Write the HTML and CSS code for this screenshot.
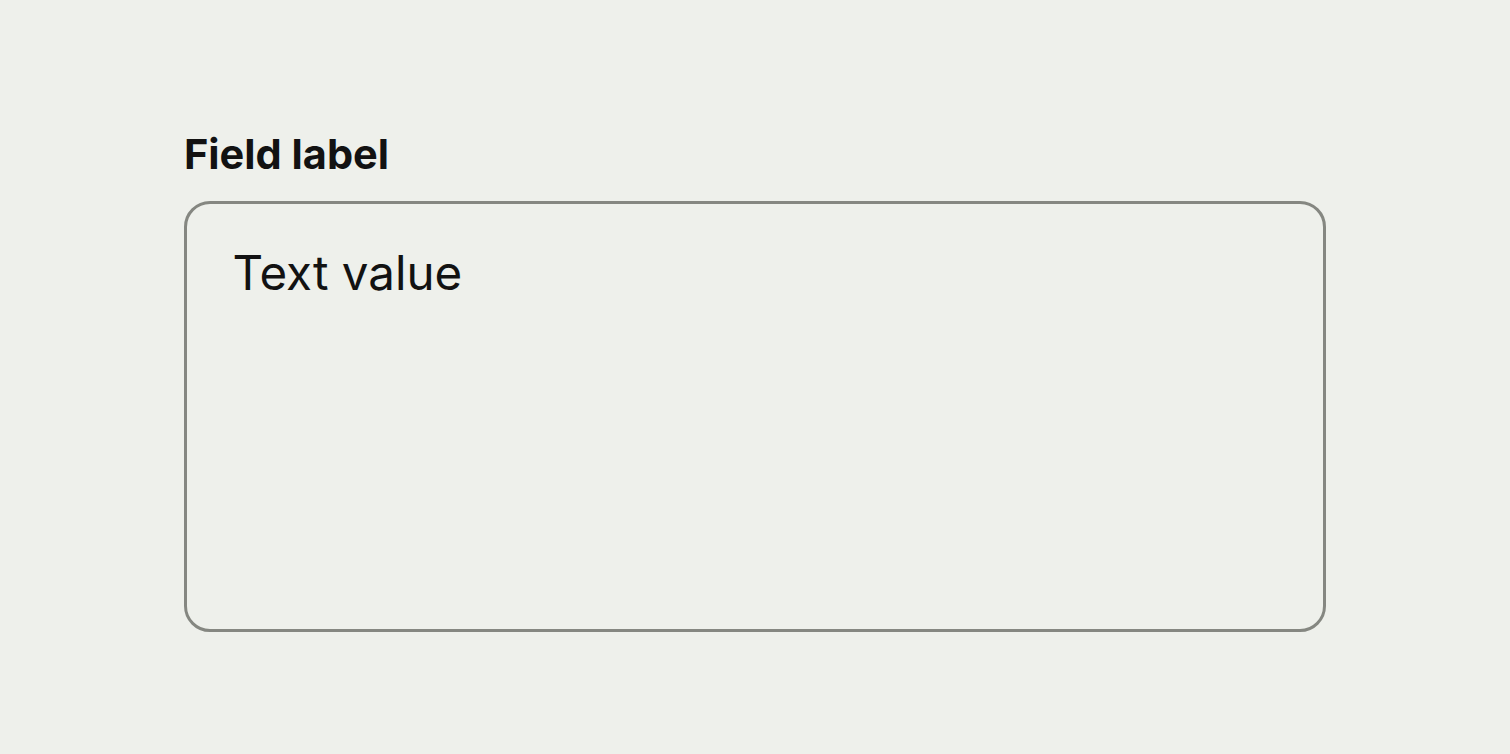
FILE: index.html
```html
<!DOCTYPE html>
<html>
<head>
<meta charset="utf-8">
<link rel="stylesheet" href="styles.css">
</head>
<body>
<main class="page">
  <div class="field">
    <label class="field-label">Field label</label>
    <div class="field-input">Text value</div>
  </div>
</main>
</body>
</html>
```
FILE: styles.css
```css
html, body {
  margin: 0;
  padding: 0;
  background: #eef0eb;
}
.page {
  padding: 129px 184px 0 184px;
  font-family: Inter, "Noto Sans", sans-serif;
  color: #121212;
}
.field {
  display: flex;
  flex-direction: column;
  gap: 21px;
  width: 1142px;
}
.field-label {
  font-size: 41.5px;
  font-weight: 700;
  line-height: 51px;
}
.field-input {
  box-sizing: border-box;
  height: 431px;
  border: 3px solid #858781;
  border-radius: 26px;
  padding: 39.5px 45.5px;
  font-size: 47.5px;
  line-height: 58px;
}
```
